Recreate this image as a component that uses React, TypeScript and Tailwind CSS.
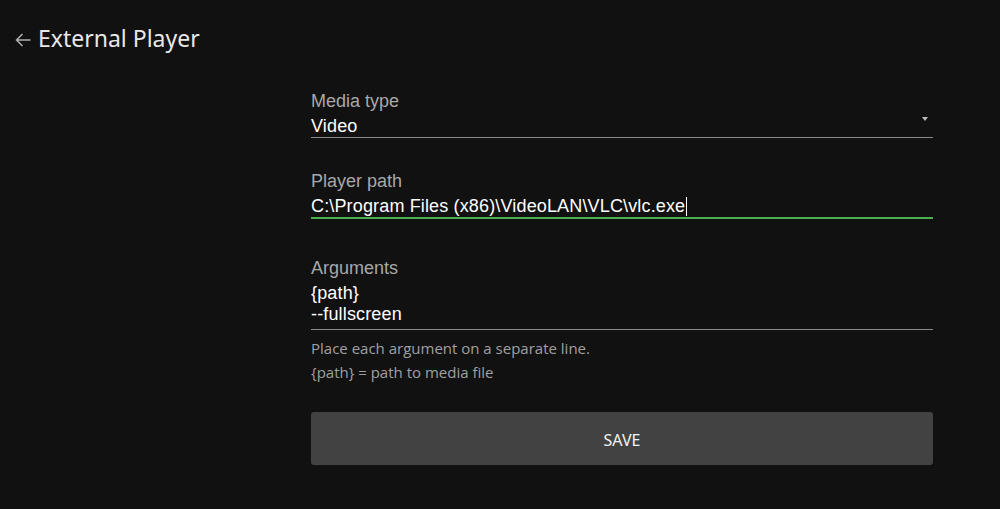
import React, { useState } from "react";

const label = "text-[18px] leading-[22px] text-[#a8a8a8]";
const value = "text-[18px] leading-[21px] tracking-[0.15px] text-white";

export default function App() {
  const [media] = useState("Video");

  return (
    <div className="min-h-[509px] w-full bg-[#111111] font-['Liberation_Sans',Arial,sans-serif]">
      {/* header */}
      <div className="flex items-center h-[76px] pl-[15px]">
        <svg width="16" height="14" viewBox="0 0 16 14" className="mt-[3px] text-[#b0b0b0]">
          <path d="M15.5 7H1.5M7.5 1L1.5 7l6 6" fill="none" stroke="currentColor" strokeWidth="1.5" />
        </svg>
        <h1 className="ml-[7px] text-[23px] text-[#e8e8e8] font-['Noto_Sans',sans-serif] font-normal">
          External Player
        </h1>
      </div>

      <div className="ml-[311px] w-[622px] flex flex-col">
        {/* media type */}
        <div className="pt-[14px] border-b border-[#8a8a8a] relative">
          <div className={label}>Media type</div>
          <div className={value + " mt-[3px] leading-[22px]"}>{media}</div>
          <div className="absolute right-[5px] top-[41px] w-0 h-0 border-l-[3px] border-r-[3px] border-t-[4px] border-l-transparent border-r-transparent border-t-[#bbbbbb]" />
        </div>

        {/* player path */}
        <div className="mt-[32px] border-b-2 border-[#4caf50]">
          <div className={label}>Player path</div>
          <div className={value + " mt-[4px] flex items-center"}>
            C:\Program Files (x86)\VideoLAN\VLC\vlc.exe
            <span className="inline-block w-px h-[19px] bg-white ml-px" />
          </div>
        </div>

        {/* arguments */}
        <div className="mt-[38px] border-b border-[#8a8a8a] pb-[4px]">
          <div className={label}>Arguments</div>
          <div className={value + " mt-[4px]"}>{"{path}"}</div>
          <div className={value}>--fullscreen</div>
        </div>
        <div className="mt-[6px] font-['Open_Sans',sans-serif] text-[15px] leading-[24px] text-[#a0a0a0]">
          <div>Place each argument on a separate line.</div>
          <div>{"{path}"} = path to media file</div>
        </div>

        <button className="mt-[28px] h-[53px] w-full rounded-[3px] bg-[#424242] pt-[2px] text-[16px] text-[#f2f2f2] font-['Noto_Sans',sans-serif] uppercase">
          Save
        </button>
      </div>
    </div>
  );
}
